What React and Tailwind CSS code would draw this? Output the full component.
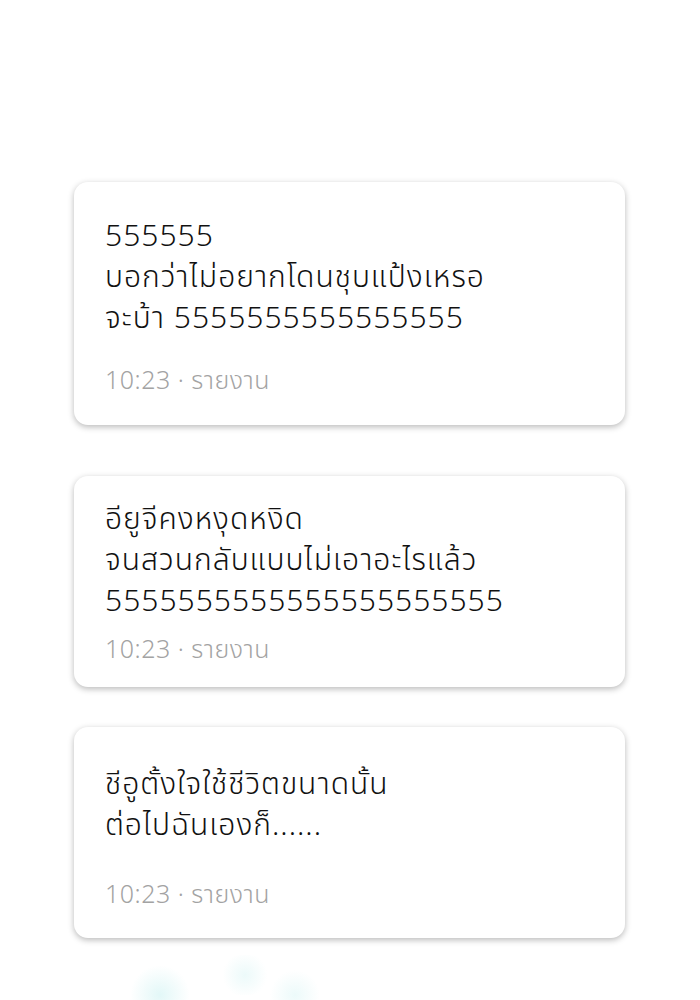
export default function App() {
  const font = { fontFamily: '"Noto Sans Thai", "Noto Sans Thai UI", "Noto Sans", "Liberation Sans", sans-serif' };
  const Card = ({ lines, className, footerClass }) => (
    <div className={"w-[551px] rounded-[14px] bg-white shadow-[0_2px_6px_rgba(0,0,0,0.28)] px-[31px] " + className}>
      <p className="text-[30px] leading-[41px] font-light tracking-[1px] text-[#111] whitespace-nowrap">
        {lines.map((l, i) => (
          <span key={i}>
            {i > 0 && <br />}
            {l}
          </span>
        ))}
      </p>
      <div className={"text-[25px] leading-[30px] font-light tracking-[0.5px] text-[#a3a3a3] " + footerClass}>10:23 · รายงาน</div>
    </div>
  );
  return (
    <div className="w-[700px] h-[1000px] bg-white overflow-hidden relative" style={font}>
      <div className="absolute left-[130px] top-[965px] w-[60px] h-[60px] rounded-full bg-[radial-gradient(circle,rgba(160,230,230,0.3),transparent_70%)]" />
      <div className="absolute left-[220px] top-[955px] w-[50px] h-[40px] rounded-full bg-[radial-gradient(circle,rgba(180,235,235,0.25),transparent_70%)]" />
      <div className="absolute left-[270px] top-[970px] w-[50px] h-[50px] rounded-full bg-[radial-gradient(circle,rgba(180,235,235,0.25),transparent_70%)]" />
      <div className="relative flex flex-col items-start pl-[74px] pt-[182px]">
        <Card
          className="pt-[35px] pb-[29px]"
          footerClass="mt-[26px]"
          lines={["555555", "บอกว่าไม่อยากโดนชุบแป้งเหรอ", "จะบ้า 5555555555555555"]}
        />
        <div className="h-[51px]" />
        <Card
          className="pt-[24px] pb-[22px]"
          footerClass="mt-[12px]"
          lines={["อียูจีคงหงุดหงิด", "จนสวนกลับแบบไม่เอาอะไรแล้ว", "5555555555555555555555"]}
        />
        <div className="h-[40px]" />
        <Card
          className="pt-[38px] pb-[28px]"
          footerClass="mt-[33px]"
          lines={["ชีอูตั้งใจใช้ชีวิตขนาดนั้น", "ต่อไปฉันเองก็......"]}
        />
      </div>
    </div>
  );
}
